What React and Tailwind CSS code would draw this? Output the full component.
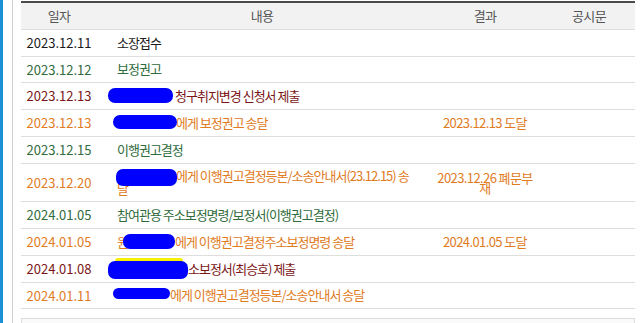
import React from "react";

const C = {
  black: "text-[#1a1a1a]",
  green: "text-[#2f6b3c]",
  red: "text-[#7a1616]",
  orange: "text-[#e07b1e]",
};

function Blob({ left, top, w, h, yellow }) {
  return (
    <span
      className={`absolute ${yellow ? "bg-[#f5f000] rounded-[3px]" : "bg-[#0000ff] rounded-[7px]"}`}
      style={{ left, top, width: w, height: h }}
    />
  );
}

function Row({ h, date, color, children, result, blobs = [], resultLead }) {
  return (
    <div className="flex border-b border-[#dedede]" style={{ height: h }}>
      <div className={`w-[76px] shrink-0 flex items-center justify-center tracking-[0px] ${color}`}>{date}</div>
      <div className={`relative w-[330px] shrink-0 flex items-center pl-[20px] pr-[10px] leading-[12.5px] tracking-[-1px] ${color}`}>
        <div className="relative z-0">{children}</div>
        {blobs.map((b, i) => (
          <Blob key={i} {...b} />
        ))}
      </div>
      <div className={`w-[116px] shrink-0 flex items-center justify-center text-center tracking-[-0.6px] ${resultLead ? "leading-[10px] px-[8px]" : ""} ${C.orange}`}>
        {result}
      </div>
      <div className="w-[92px] shrink-0" />
    </div>
  );
}

const Sp = ({ w }) => <span className="inline-block" style={{ width: w }} />;

export default function App() {
  return (
    <div className="w-[644px] h-[323px] overflow-hidden bg-white flex text-[13px] [font-family:'Noto_Sans_CJK_KR',sans-serif]">
      <div className="w-[3px] shrink-0 bg-[#1b8fd6]" />
      <div className="w-[9px] shrink-0 bg-white" />
      <div className="w-[1px] shrink-0 bg-[#d0d0d0]" />
      <div className="w-[8px] shrink-0" />
      <div className="w-[614px] shrink-0 pt-[1px]">
        <div className="h-[2px] bg-[#4a4a4a]" />
        <div className="flex h-[27px] bg-[#f2f2f2] border-b border-[#dedede] text-[#555] tracking-[-0.6px]">
          <div className="w-[76px] flex items-center justify-center">일자</div>
          <div className="w-[330px] flex items-center justify-center">내용</div>
          <div className="w-[116px] flex items-center justify-center">결과</div>
          <div className="w-[92px] flex items-center justify-center">공시문</div>
        </div>
        <Row h={27} date="2023.12.11" color={C.black}>소장접수</Row>
        <Row h={26} date="2023.12.12" color={C.green}>보정권고</Row>
        <Row h={27} date="2023.12.13" color={C.red} blobs={[{ left: 11, top: 5, w: 65, h: 15 }]}>
          <Sp w={58} />청구취지변경 신청서 제출
        </Row>
        <Row h={27} date="2023.12.13" color={C.orange} result="2023.12.13 도달" blobs={[{ left: 16, top: 5, w: 64, h: 14 }]}>
          <Sp w={59} />에게 보정권고 송달
        </Row>
        <Row h={27} date="2023.12.15" color={C.green}>이행권고결정</Row>
        <Row h={38} date="2023.12.20" color={C.orange} result="2023.12.26 폐문부재" resultLead blobs={[{ left: 19, top: 5, w: 61, h: 17 }]}>
          <Sp w={59} />에게 이행권고결정등본/소송안내서(23.12.15) 송달
        </Row>
        <Row h={27} date="2024.01.05" color={C.green}>참여관용 주소보정명령/보정서(이행권고결정)</Row>
        <Row h={27} date="2024.01.05" color={C.orange} result="2024.01.05 도달" blobs={[{ left: 26, top: 5, w: 52, h: 15 }]}>
          원<Sp w={47} />에게 이행권고결정주소보정명령 송달
        </Row>
        <Row
          h={27}
          date="2024.01.08"
          color={C.red}
          blobs={[
            { left: 18, top: 2, w: 68, h: 15, yellow: true },
            { left: 11, top: 5, w: 80, h: 18 },
          ]}
        >
          <Sp w={60} />주소보정서(최승호) 제출
        </Row>
        <Row h={26} date="2024.01.11" color={C.orange} blobs={[{ left: 16, top: 5, w: 57, h: 11 }]}>
          <Sp w={53} />에게 이행권고결정등본/소송안내서 송달
        </Row>
        <div className="mt-[9px] h-[20px] border border-[#dcdcdc] bg-[#fafafa]" />
      </div>
    </div>
  );
}
